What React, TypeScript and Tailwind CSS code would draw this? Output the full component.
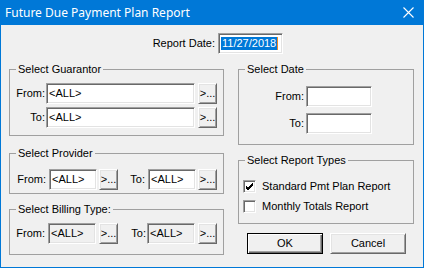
const sunken =
  'border border-t-[#a0a0a0] border-l-[#a0a0a0] border-b-white border-r-white shadow-[inset_1px_1px_0_#696969,inset_-1px_-1px_0_#e3e3e3]';
const raised =
  'border border-t-white border-l-white border-b-[#696969] border-r-[#696969] shadow-[inset_1px_1px_0_#e3e3e3,inset_-1px_-1px_0_#a0a0a0] bg-[#f0f0f0]';

function Field({ w, value = '', disabled = false }: { w: string; value?: string; disabled?: boolean }) {
  return (
    <div className={`${w} h-[21px] ${sunken} ${disabled ? 'bg-[#f0f0f0]' : 'bg-white'} flex items-center pl-[2px] leading-none`}>
      {value}
    </div>
  );
}

function Browse() {
  return (
    <div className={`w-[19px] h-[21px] ${raised} flex items-center justify-center leading-none pb-[1px]`}>
      &gt;...
    </div>
  );
}

function Group({ title, className = '', children }: { title: string; className?: string; children: React.ReactNode }) {
  return (
    <fieldset className={`border border-[#a0a0a0] ${className}`}>
      <legend className="ml-[6px] px-[2px] h-[13px] leading-[13px]">{title}</legend>
      {children}
    </fieldset>
  );
}

function Check({ checked, label }: { checked: boolean; label: string }) {
  return (
    <div className="flex items-center h-[13px] pl-[4px]">
      <div className={`w-[13px] h-[13px] ${sunken} bg-white flex items-center justify-center`}>
        {checked && (
          <svg width="9" height="9" viewBox="0 0 9 9">
            <path d="M1 4 L3 6 L8 1 M1 5 L3 7 L8 2 M1 6 L3 8 L8 3" stroke="#000" strokeWidth="1" fill="none" shapeRendering="crispEdges" />
          </svg>
        )}
      </div>
      <span className="ml-[6px]">{label}</span>
    </div>
  );
}

export default function App() {
  return (
    <div className="w-[424px] h-[268px] bg-[#0078d7] flex flex-col font-['Liberation_Sans',Arial,sans-serif] text-[11px] text-black">
      <div className="h-[25px] flex items-center justify-between pl-[5px] pr-[10px] text-white text-[12px] font-['Noto_Sans',sans-serif]">
        <span>Future Due Payment Plan Report</span>
        <svg width="11" height="11" viewBox="0 0 11 11">
          <path d="M0.5 0.5 L10.5 10.5 M10.5 0.5 L0.5 10.5" stroke="#fff" strokeWidth="1.1" />
        </svg>
      </div>
      <div className="flex-1 mx-[1px] mb-[1px] bg-[#f0f0f0] flex flex-col">
        <div className="flex items-center mt-[8px]">
          <span className="w-[214px] text-right">Report Date:</span>
          <div className={`ml-[3px] w-[65px] h-[21px] ${sunken} bg-white flex items-center pl-[2px]`}>
            <span className="bg-[#0078d7] text-white leading-[13px] px-[1px]">11/27/2018</span>
            <span className="w-[1px] h-[13px] bg-[#f08a24]" />
          </div>
        </div>

        <div className="flex mt-[9px]">
          <div className="ml-[8px] w-[215px] flex flex-col">
            <Group title="Select Guarantor" className="pb-[7px]">
              <div className="flex mt-[7px]">
                <span className="w-[35px] text-right self-center">From:</span>
                <div className="ml-[1px]"><Field w="w-[149px]" value="<ALL>" /></div>
                <div className="ml-[3px]"><Browse /></div>
              </div>
              <div className="flex mt-[3px]">
                <span className="w-[35px] text-right self-center">To:</span>
                <div className="ml-[1px]"><Field w="w-[149px]" value="<ALL>" /></div>
                <div className="ml-[3px]"><Browse /></div>
              </div>
            </Group>

            <Group title="Select Provider" className="mt-[11px] pb-[3px]">
              <div className="flex items-center mt-[9px]">
                <span className="w-[39px] pr-[3px] text-right">From:</span>
                <Field w="w-[48px]" value="<ALL>" />
                <div className="ml-[2px]"><Browse /></div>
                <span className="w-[30px] pr-[3px] text-right">To:</span>
                <Field w="w-[48px]" value="<ALL>" />
                <div className="ml-[2px]"><Browse /></div>
              </div>
            </Group>

            <Group title="Select Billing Type:" className="mt-[9px] pb-[10px]">
              <div className="flex items-center mt-[7px]">
                <span className="w-[38px] pr-[3px] text-right">From:</span>
                <Field w="w-[48px]" value="<ALL>" disabled />
                <div className="ml-[3px]"><Browse /></div>
                <span className="w-[29px] pr-[1px] text-right">To:</span>
                <Field w="w-[48px]" value="<ALL>" disabled />
                <div className="ml-[3px]"><Browse /></div>
              </div>
            </Group>
          </div>

          <div className="ml-[14px] w-[176px] flex flex-col">
            <Group title="Select Date" className="pb-[10px]">
              <div className="flex items-center mt-[10px]">
                <span className="w-[65px] text-right">From:</span>
                <div className="ml-[2px]"><Field w="w-[66px]" /></div>
              </div>
              <div className="flex items-center mt-[6px]">
                <span className="w-[65px] text-right">To:</span>
                <div className="ml-[2px]"><Field w="w-[66px]" /></div>
              </div>
            </Group>

            <Group title="Select Report Types" className="mt-[9px] pb-[10px]">
              <div className="mt-[13px]">
                <Check checked label="Standard Pmt Plan Report" />
              </div>
              <div className="mt-[7px]">
                <Check checked={false} label="Monthly Totals Report" />
              </div>
            </Group>

            <div className="flex mt-[9px] ml-[9px] gap-[7px]">
              <div className="w-[76px] h-[21px] border border-black bg-[#f0f0f0] shadow-[inset_1px_1px_0_#fff,inset_-1px_-1px_0_#696969,inset_-2px_-2px_0_#a0a0a0] flex items-center justify-center">
                OK
              </div>
              <div className={`w-[76px] h-[21px] ${raised} flex items-center justify-center`}>Cancel</div>
            </div>
          </div>
        </div>
      </div>
    </div>
  );
}
